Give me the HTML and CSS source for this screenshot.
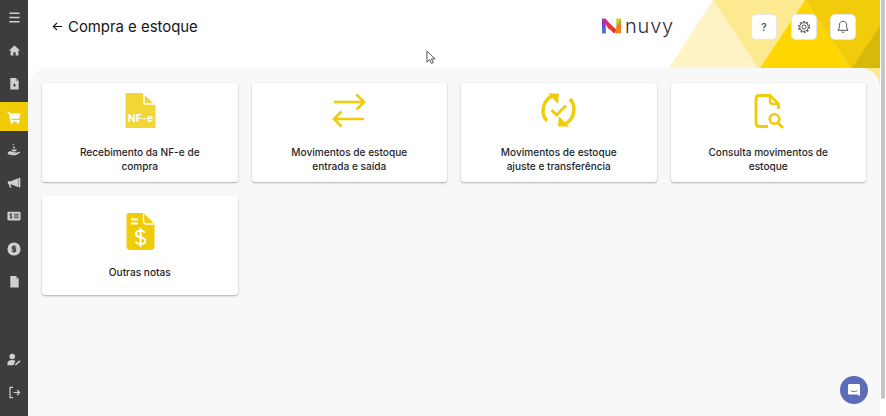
FILE: index.html
```html
<!DOCTYPE html>
<html lang="pt-BR">
<head>
<meta charset="utf-8">
<title>Compra e estoque</title>
<link rel="stylesheet" href="styles.css">
</head>
<body>
<div class="app">
  <nav class="sidebar">
    <div class="nav-item"><svg class="nav-icon" viewBox="0 0 14 14"><path d="M1.500 2.500h11M1.500 7h11M1.500 11.500h11" stroke="#cfcfcf" stroke-width="1.700" fill="none"/></svg></div>
    <div class="nav-item"><svg class="nav-icon" viewBox="0 0 14 14"><path d="M7 1.500 1 7h1.800v5.500h3V9h2.400v3.500h3V7H13z" fill="#d0d0d0"/></svg></div>
    <div class="nav-item"><svg class="nav-icon" viewBox="0 0 14 14"><path d="M2.500 1h6l3 3v9.500h-9z" fill="#d0d0d0"/><path d="M7 7v3.500M5.300 8.800h3.400" stroke="#3d3d3d" stroke-width="1"/><path d="M8.500 1v3h3" fill="#8a8a8a"/></svg></div>
    <div class="nav-item active"><span class="nav-active"><svg class="nav-icon-lg" viewBox="0 0 16 16"><path d="M.5 2h2.400l.5 2h12l-1.500 6H5l.3 1.500h9v1.500H4L2 3.500H.5z" fill="#fff"/><circle cx="5.500" cy="14.300" r="1.400" fill="#fff"/><circle cx="12.500" cy="14.300" r="1.400" fill="#fff"/></svg></span></div>
    <div class="nav-item"><svg class="nav-icon-lg" viewBox="0 0 16 16"><path d="M1 10.500c2-1.500 3.500-1 5-.5h3c1 0 1 1.500 0 1.500H7l.5.400 3-.7 3.500-1.200c1-.2 1.200.8.500 1.300L10 14H5.500L3 13H1z" fill="#cfcfcf"/><path d="M5 7.500h6.500L10 9.500H6.500z" fill="#cfcfcf"/><circle cx="8" cy="5" r="1.100" fill="#cfcfcf"/><circle cx="7" cy="1.800" r=".8" fill="#cfcfcf"/></svg></div>
    <div class="nav-item"><svg class="nav-icon-lg" viewBox="0 0 16 16"><path d="M1 6h3.500l8-3.500v10L4.500 9.500H4l1 4H3.300L2.200 9.500H1z" fill="#d0d0d0"/><rect x="13" y="2" width="2.200" height="11" rx="1.100" fill="#d0d0d0"/></svg></div>
    <div class="nav-item"><svg class="nav-icon-lg" viewBox="0 0 16 16"><rect x=".5" y="3" width="15" height="10" rx="1.500" fill="#d0d0d0"/><path d="M8 6h5.500M8 8h5.500M8 10h5.500" stroke="#3d3d3d" stroke-width="1"/><path d="M6 5.800H3.500v2.200h2v2.200H3M4.500 4.800v6.400" stroke="#3d3d3d" stroke-width=".9" fill="none"/></svg></div>
    <div class="nav-item"><svg class="nav-icon-lg" viewBox="0 0 16 16"><circle cx="8" cy="8" r="7.500" fill="#d0d0d0"/><path d="M10.500 5.500H6.200v2.400h3.600v2.500H5.500M8 3.800v8.400" stroke="#3d3d3d" stroke-width="1.300" fill="none"/></svg></div>
    <div class="nav-item"><svg class="nav-icon" viewBox="0 0 14 14"><path d="M2.500 1h6l3 3v9.500h-9z" fill="#d0d0d0"/><path d="M8.500 1v3h3" fill="#999"/></svg></div>
    <div class="nav-spacer"></div>
    <div class="nav-item"><svg class="nav-icon-lg" viewBox="0 0 16 16"><circle cx="6" cy="4" r="3.200" fill="#d0d0d0"/><path d="M.5 14v-2.500C.5 9.500 2.500 8 6 8c1.500 0 2.500.3 3.500.8L7.500 14z" fill="#d0d0d0"/><path d="m9.500 13.500 5.500-4.500" stroke="#d0d0d0" stroke-width="1.800"/></svg></div>
    <div class="nav-item"><svg class="nav-icon" viewBox="0 0 14 14"><path d="M5.500 1.500H2.200v11h3.300M6 7h6.500M9.800 4.300 12.500 7l-2.700 2.700" stroke="#d0d0d0" stroke-width="1.300" fill="none"/></svg></div>
  </nav>

  <div class="main">
    <svg class="backdrop" viewBox="0 0 211 92" aria-hidden="true">
      <path d="M44 0 0 68h89z" fill="#fdf3c4"/>
      <path d="M44 0h92L91 68h-2z" fill="#fde98f"/>
      <path d="M136 0 91 68h90z" fill="#ffd600"/>
      <path d="M136 0h75v68h-30z" fill="#f0cc0a"/>
      <path d="M211 26v42h-28z" fill="#d9b80c"/>
      <path d="M195 68h16v24z" fill="#fde98f"/>
    </svg>

    <header class="topbar">
      <svg class="back" viewBox="0 0 12 12"><path d="M11 6H1.500M5.500 2 1.500 6l4 4" stroke="#111" stroke-width="1.300" fill="none"/></svg>
      <h1 class="title">Compra e estoque</h1>
      <div class="logo">
        <svg class="logo-mark" viewBox="0 0 22 18">
          <path d="M0 1h4v16H0z" fill="#7a3fc8"/>
          <path d="M0 1h4l6 7-2 5z" fill="#d8288a"/>
          <path d="m8 6 8 7-2 4h-1L5 9z" fill="#e8352f"/>
          <path d="M16 1h5v6l-5 3z" fill="#8bc53f"/>
          <path d="M16 1h5l-5 6z" fill="#f5c518"/>
          <path d="M16 8l5-2v11h-6z" fill="#f0801f"/>
          <path d="M0 11h4v6H0z" fill="#4a6fd5"/>
        </svg>
        <span class="logo-text">nuvy</span>
      </div>
      <div class="actions">
        <button class="action"><span class="help">?</span></button>
        <button class="action"><svg class="action-icon" viewBox="0 0 14 14"><circle cx="7" cy="7" r="2" fill="none" stroke="#555" stroke-width="1"/><circle cx="7" cy="7" r="4.300" fill="none" stroke="#555" stroke-width="1"/><circle cx="7" cy="7" r="5.400" fill="none" stroke="#555" stroke-width="1.400" stroke-dasharray="1.700 1.700"/></svg></button>
        <button class="action"><svg class="action-icon" viewBox="0 0 14 14"><path d="M7 1.300c-2.400 0-3.700 1.800-3.700 4v2.500L2 10.300h10L10.700 7.800V5.300c0-2.200-1.300-4-3.700-4z" fill="none" stroke="#555" stroke-width="1"/><path d="M5.700 11.800c.4.800 2.200.8 2.600 0" fill="none" stroke="#555" stroke-width="1"/></svg></button>
      </div>
    </header>

    <section class="panel">
      <div class="cards">
        <a class="card">
          <svg class="card-icon" viewBox="0 0 40 38">
            <path d="M5.500 1H23l12.500 12v23h-30z" fill="#f1d636"/>
            <path d="M24 1.500 35 12H26c-1.200 0-2-.8-2-2z" fill="#f1d636" stroke="#fff" stroke-width="1.400"/>
            <text class="nfe" x="20.500" y="29.500" text-anchor="middle">NF-e</text>
          </svg>
          <span class="card-text">Recebimento da NF-e de<br>compra</span>
        </a>
        <a class="card">
          <svg class="card-icon" viewBox="0 0 40 38">
            <path d="M5 10h30M27.500 2.500 35 10l-7.500 7.500M35 27H5M12.500 19.500 5 27l7.500 7.500" fill="none" stroke="#f0cb08" stroke-width="2.600"/>
          </svg>
          <span class="card-text">Movimentos de estoque<br>entrada e saída</span>
        </a>
        <a class="card">
          <svg class="card-icon" viewBox="0 0 40 38">
            <path d="M8 29C1.500 22 3 9 13 4M31 7c6.500 7 5 20-5 25" fill="none" stroke="#f0cb08" stroke-width="3.400"/>
            <path d="M9 1.500h11l-1 10.500zM30 34.500H19l1-10.500z" fill="#f0cb08"/>
            <path d="m12.500 18 5 5 9.500-9.500" fill="none" stroke="#f0cb08" stroke-width="2.800"/>
          </svg>
          <span class="card-text">Movimentos de estoque<br>ajuste e transferência</span>
        </a>
        <a class="card">
          <svg class="card-icon" viewBox="0 0 40 38">
            <path d="M20 34.500h-8.500c-2.200 0-3.500-1.300-3.500-3.500V7c0-2.200 1.300-3.500 3.500-3.500H22l8.500 8.500v5" fill="none" stroke="#f0cb08" stroke-width="2.800"/>
            <path d="M22 4v5c0 2 1 3 3 3h5" fill="none" stroke="#f0cb08" stroke-width="2.400"/>
            <circle cx="26.500" cy="27" r="4.800" fill="none" stroke="#f0cb08" stroke-width="2.600"/>
            <path d="m30 31 5 5" stroke="#f0cb08" stroke-width="2.800"/>
          </svg>
          <span class="card-text">Consulta movimentos de<br>estoque</span>
        </a>
        <a class="card">
          <svg class="card-icon" viewBox="0 0 40 38">
            <path d="M9 1h14.500l11 11v22.500c0 2-1.500 3.500-3.500 3.500H10c-2 0-3.500-1.500-3.500-3.500v-31C6.500 2 7.500 1 9 1z" fill="#f0cb08"/>
            <path d="M23.500 1.500V9c0 2 1 3 3 3h7.500" fill="none" stroke="#fff" stroke-width="1.400"/>
            <path d="M11 7.500h7M11 11.500h7" stroke="#fff" stroke-width="2"/>
            <path d="M25 20.500c-1-1.300-2.500-1.800-4.500-1.800-2.500 0-4.500 1-4.500 3.200 0 4.600 9.300 2.200 9.300 6.800 0 2.300-2.200 3.300-4.700 3.300-2.200 0-4-.8-5-2.300M20.500 16v19" fill="none" stroke="#fff" stroke-width="2"/>
          </svg>
          <span class="card-text">Outras notas</span>
        </a>
      </div>
    </section>

    <svg class="cursor" viewBox="0 0 11 16"><path d="M1 1v12l3-2.700 2 4.200 2-.9-2-4.100h4z" fill="#fff" stroke="#333" stroke-width=".9"/></svg>
    <div class="chat"><svg class="chat-icon" viewBox="0 0 14 14"><path d="M2.500 1h9C12.500 1 13 1.500 13 2.500V13l-2.800-1.500H2.500C1.500 11.500 1 11 1 10V2.500C1 1.500 1.500 1 2.500 1z" fill="#fff"/><path d="M3.800 7.700c1.800 1.300 4.600 1.300 6.400 0" fill="none" stroke="#5c6cb8" stroke-width="1"/></svg></div>
  </div>

  <div class="scrollbar"><div class="thumb"></div></div>
</div>
</body>
</html>
```

FILE: styles.css
```css
* { box-sizing: border-box; }
html, body { margin: 0; height: 100%; overflow: hidden; }
body { background: #fff; font-family: "Inter", "Open Sans", sans-serif; color: #1b1b22; }
.app { display: flex; width: 886px; height: 416px; }

.sidebar { width: 28px; flex: none; background: #3d3d3d; display: flex; flex-direction: column; padding: 1px 0 7px; }
.nav-item { height: 33px; display: flex; align-items: center; justify-content: center; flex: none; }
.nav-spacer { flex: 1; }
.nav-active { width: 28px; height: 29px; background: #f0cb08; display: flex; align-items: center; justify-content: center; }
.nav-icon { width: 13px; height: 13px; }
.nav-icon-lg { width: 14px; height: 14px; }

.main { flex: 1; position: relative; display: flex; flex-direction: column; min-width: 0; }
.backdrop { position: absolute; top: 0; right: 0; width: 211px; height: 92px; }

.topbar { position: relative; height: 68px; flex: none; display: flex; align-items: center; padding: 0 24px 15px 24px; }
.back { width: 11px; height: 11px; margin-right: 5px; }
.title { margin: 0; font-size: 14.900px; font-weight: 400; color: #15151c; }
.logo { margin-left: auto; display: flex; align-items: flex-end; gap: 3px; margin-top: -1px; }
.logo-mark { width: 20px; height: 18px; }
.logo-text { font-size: 20px; line-height: 18px; font-weight: 300; letter-spacing: .8px; color: #2c2c34; }
.actions { display: flex; gap: 13.500px; margin-left: 77px; }
.action { width: 26px; height: 26px; padding: 0; background: #fff; border: 1px solid #e6e6ea; border-radius: 5px; display: flex; align-items: center; justify-content: center; }
.help { font-size: 10px; font-weight: 600; color: #555; font-family: "Inter", sans-serif; }
.action-icon { width: 14px; height: 14px; }

.panel { position: relative; flex: 1; background: #f8f8f8; border-radius: 20px 20px 0 0; padding: 15px 14px 0; }
.cards { display: grid; grid-template-columns: repeat(4, 1fr); gap: 14px; }
.card { height: 99px; background: #fff; border-radius: 3px; box-shadow: 0 1px 2px rgba(0, 0, 0, .3); display: flex; flex-direction: column; align-items: center; justify-content: center; gap: 15px; }
.card-icon { width: 40px; height: 38px; flex: none; }
.card-text { font-size: 10.100px; line-height: 14px; font-weight: 500; text-align: center; color: #1f1f28; }
.nfe { font-family: "Inter", sans-serif; font-size: 10.500px; font-weight: 700; fill: #fff; }

.cursor { position: absolute; left: 398px; top: 50px; width: 10px; height: 15px; }
.chat { position: absolute; right: 12px; bottom: 12px; width: 28px; height: 28px; border-radius: 50%; background: #5c6cb8; display: flex; align-items: center; justify-content: center; }
.chat-icon { width: 14px; height: 14px; }

.scrollbar { width: 6px; flex: none; background: #fff; position: relative; }
.thumb { width: 4px; margin-left: 1px; height: 399px; background: #c4c4cc; border-radius: 0 0 2px 2px; }
```
